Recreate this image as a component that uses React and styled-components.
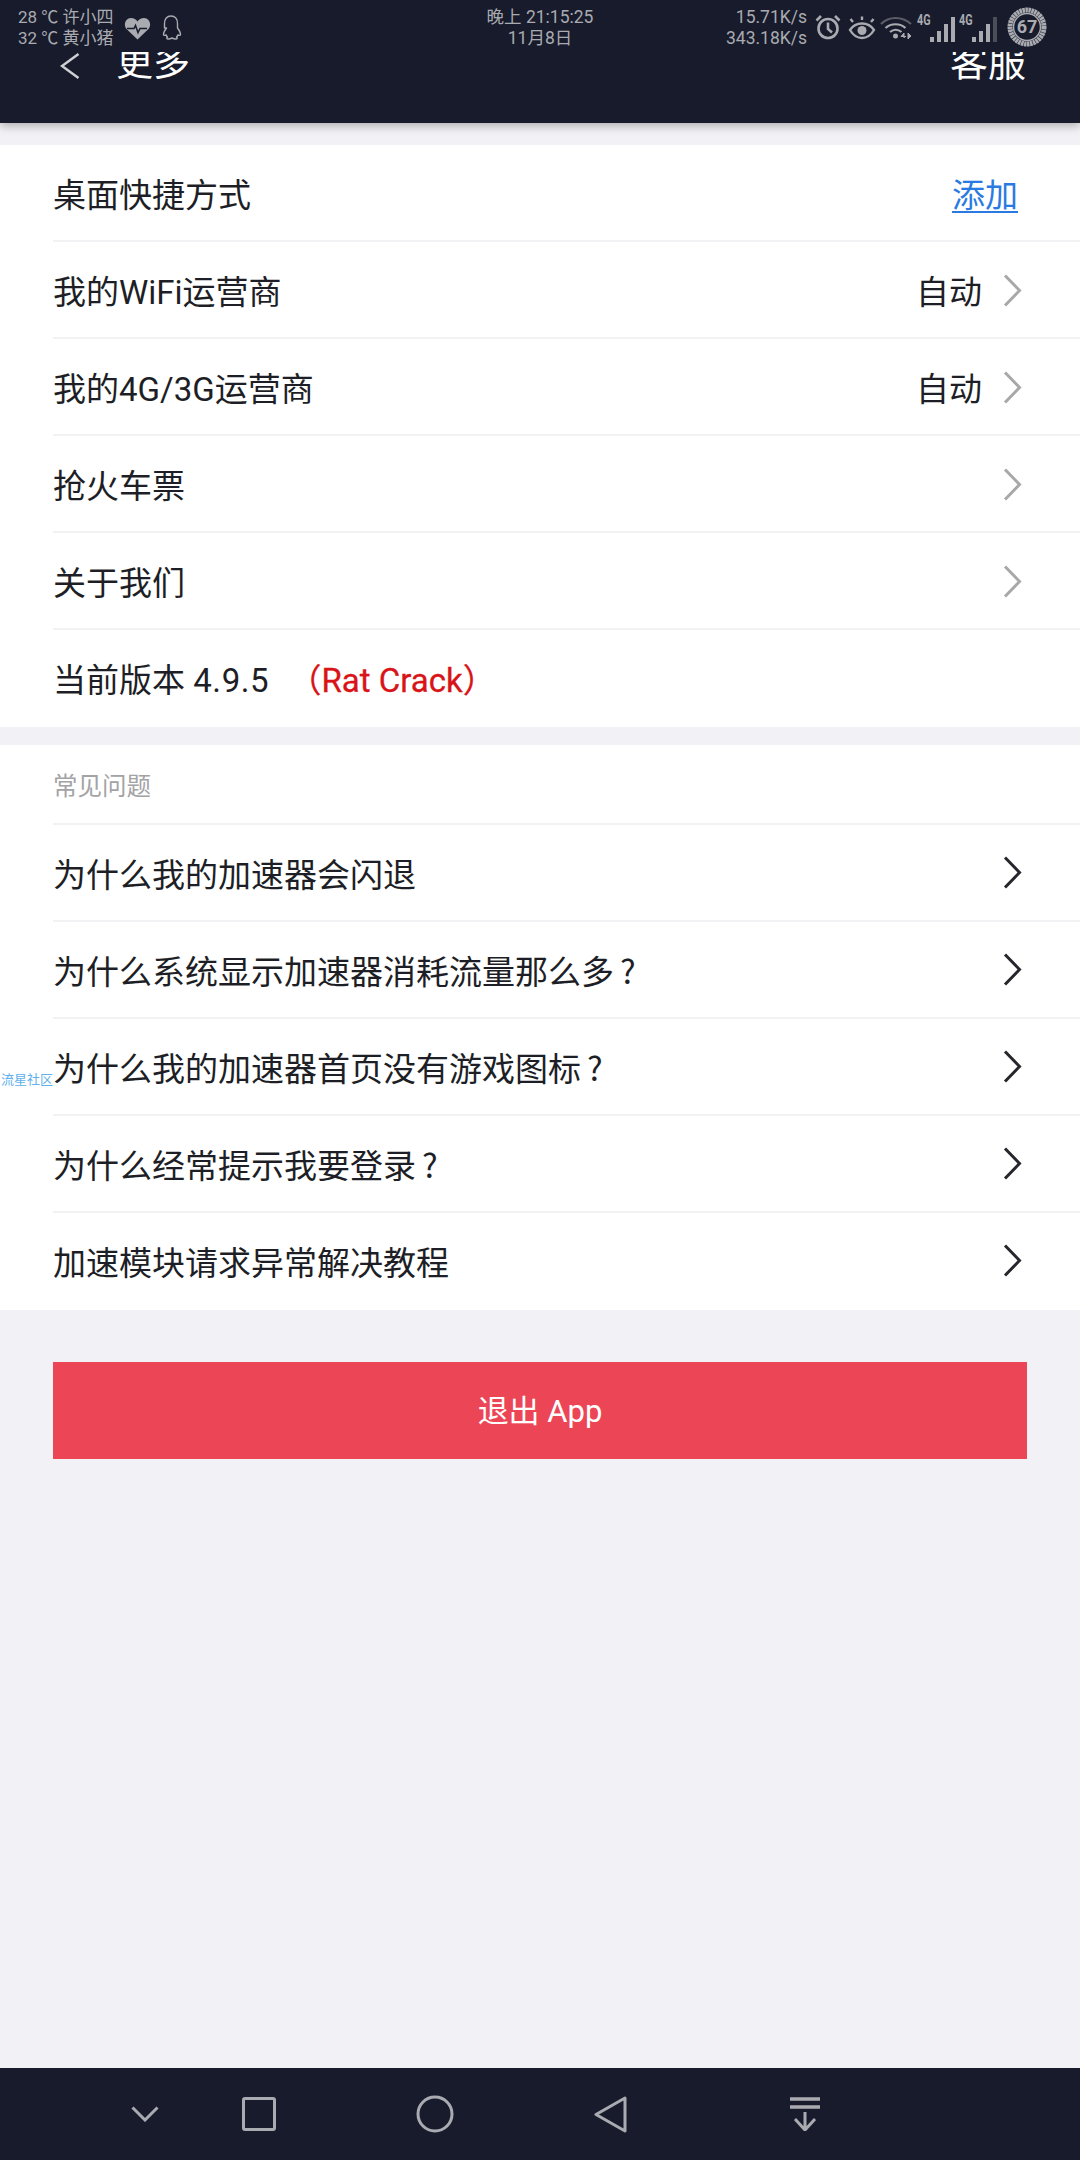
import React from 'react';
import styled, { createGlobalStyle } from 'styled-components';

const Global = createGlobalStyle`
	html, body { margin: 0; padding: 0; background: #f1f1f6; }
	* { box-sizing: border-box; }
	body { font-family: Roboto, "Noto Sans CJK SC", sans-serif; }
`;

const Page = styled.div`
	position: relative;
	width: 1080px;
	height: 2160px;
	display: flex;
	flex-direction: column;
	background: #f1f1f6;
	overflow: hidden;
`;
const Header = styled.header`
	background: #181b2b;
	box-shadow: 0 3px 9px rgba(0, 0, 0, 0.28);
`;
const StatusBar = styled.div`
	height: 52px;
	display: grid;
	grid-template-columns: minmax(0, 1fr) auto minmax(0, 1fr);
	align-items: start;
	padding: 7px 18px 0;
	color: #a9abb1;
	font-size: 17px;
	line-height: 20.5px;
`;
const StatusLeft = styled.div`
	display: flex;
	align-items: flex-start;
	gap: 9px;
`;
const StatusRight = styled.div`
	display: flex;
	justify-content: flex-end;
	align-items: flex-start;
	padding-right: 15px;
`;
const TwoLines = styled.div`
	text-align: ${(p) => p.$align || 'left'};
	white-space: nowrap;
	font-size: ${(p) => p.$size || 17}px;
`;
const IconWrap = styled.span`
	display: block;
	margin-top: ${(p) => p.$top || 0}px;
	margin-left: ${(p) => p.$left || 0}px;
	line-height: 0;
`;
const Net = styled.span`
	position: relative;
	display: block;
	width: 40px;
	height: 30px;
	margin-left: ${(p) => p.$left || 0}px;
	margin-top: 5px;
`;
const NetLabel = styled.span`
	position: absolute;
	left: 0;
	top: 1px;
	font-size: 15px;
	line-height: 14px;
	font-weight: 700;
	transform: scaleX(0.72);
	transform-origin: left top;
`;
const Dial = styled.span`
	position: relative;
	display: block;
	width: 40px;
	height: 40px;
	margin-left: 8px;
	line-height: 40px;
	text-align: center;
	font-size: 18px;
	font-weight: 700;
	color: #a9abb1;
`;
const DialRing = styled.svg`
	position: absolute;
	left: 0;
	top: 0;
`;
const NavBar = styled.div`
	height: 71px;
	overflow: hidden;
	display: flex;
	align-items: flex-start;
	padding: 1px 54px 0 60px;
	color: #fff;
`;
const BackIcon = styled.svg`
	flex: none;
	margin-right: 36px;
`;
const NavTitle = styled.div`
	font-size: ${(p) => p.$size}px;
	line-height: 38px;
	margin-top: ${(p) => p.$shift}px;
	${(p) => p.$end && 'margin-left: auto;'}
`;
const Section = styled.section`
	background: #fff;
	margin-top: ${(p) => p.$top}px;
`;
const Row = styled.div`
	height: 97px;
	margin-left: 53px;
	padding-right: 58px;
	display: flex;
	align-items: center;
	font-size: 33px;
	color: #1e1f26;
	border-bottom: 2px solid ${(p) => (p.$last ? 'transparent' : '#f2f2f4')};
`;
const RowLabel = styled.span`
	flex: 1;
	white-space: nowrap;
`;
const RowValue = styled.span`
	margin-right: 21px;
`;
const AddLink = styled.a`
	color: #2a7ae2;
	text-decoration: underline;
	text-underline-offset: 4px;
	text-decoration-thickness: 2px;
	margin-right: 4px;
`;
const VersionNumber = styled.span`
	letter-spacing: 0.6px;
`;
const Crack = styled.span`
	color: #d81418;
	margin-left: 11px;
	-webkit-text-stroke: 0.3px #d81418;
`;
const Ask = styled.span`
	font-family: "Noto Sans CJK SC", sans-serif;
	margin-left: 6px;
`;
const GroupTitle = styled.div`
	height: 80px;
	margin-left: 53px;
	display: flex;
	align-items: center;
	font-size: 24.5px;
	color: #a3a3a6;
	border-bottom: 2px solid #f2f2f4;
`;
const Watermark = styled.div`
	position: absolute;
	left: 1px;
	top: 1072px;
	font-size: 13px;
	line-height: 16px;
	color: #5fb0ec;
`;
const ExitButton = styled.button`
	display: block;
	width: 974px;
	height: 97px;
	margin: 52px 0 0 53px;
	padding: 0 0 4px;
	border: 0;
	background: #ec4656;
	color: #fff;
	font: 31px Roboto, "Noto Sans CJK SC", sans-serif;
`;
const Spacer = styled.div`
	flex: 1;
`;
const BottomBar = styled.nav`
	height: 92px;
	padding-left: 88px;
	display: grid;
	grid-template-columns: 113px 115px 237px 114px 275px;
	align-items: center;
	justify-items: center;
	background: #181b2b;
`;
const ChevronIcon = styled.svg`
	margin-top: ${(p) => p.$drop || 0}px;
`;

const grey = '#a9abb1';

const HeartIcon = () => (
	<svg width="27" height="23" viewBox="0 0 27 23">
		<path d="M13.500 22.500L2.500 12C-1 8 1.500 1 7 1c3 0 5 1.500 6.500 3.500C15 2.500 17 1 20 1c5.500 0 8 7 4.500 11z" fill={grey} />
		<path d="M3 11.500h7l1.500-3 2.500 7 2-4h7" fill="none" stroke="#181b2b" strokeWidth="1.500" />
	</svg>
);
const PenguinIcon = () => (
	<svg width="22" height="25" viewBox="0 0 22 25" fill="none" stroke={grey} strokeWidth="1.400" strokeLinejoin="round">
		<path d="M4.500 13V8.500C4.500 4 7 1 11 1s6.500 3 6.500 7.500V13c1.500 2 3 4.500 3 6.500 0 1-.8 1.300-2.500.3-.3 1-.8 1.700-1.500 2.300 1 .5 1.300 1.900-1 1.900-1.300 0-2.500-.5-3.500-1-1 .5-2.200 1-3.500 1-2.300 0-2-1.400-1-1.900-.7-.6-1.200-1.300-1.500-2.300-1.700 1-2.500.7-2.500-.3 0-2 1.500-4.500 3-6.500z" />
	</svg>
);
const AlarmIcon = () => (
	<svg width="26" height="26" viewBox="0 0 26 26" fill="none" stroke={grey} strokeWidth="2.600">
		<circle cx="13" cy="14.500" r="9.500" />
		<path d="M13 8.500v6.500l4 3.500M1.500 6.500L6 2M24.500 6.500L20 2" />
	</svg>
);
const EyeIcon = () => (
	<svg width="28" height="24" viewBox="0 0 28 24" fill="none" stroke={grey} strokeWidth="2.400">
		<path d="M2 14c3-4.500 7-6.500 12-6.500S23 9.500 26 14c-3 5-7 8-12 8S5 19 2 14z" />
		<circle cx="14" cy="14.500" r="4.500" fill={grey} stroke="none" />
		<path d="M5 6L2.500 3M14 4V0.500M23 6l2.500-3" />
	</svg>
);
const WifiIcon = () => (
	<svg width="32" height="25" viewBox="0 0 32 25" fill="none" stroke={grey} strokeWidth="2.200">
		<path d="M1 9C9 1 22 1 31 9" stroke="#5b5d68" />
		<path d="M5.500 13C11 8 20 8 25.500 13M10 17c3.500-3 8-3 11.500 0" />
		<circle cx="15.500" cy="21" r="2.500" fill={grey} stroke="none" />
		<path d="M24 23v-5l-3 3.500h5M28 18l3 3-3 3z" fill={grey} strokeWidth="1" />
	</svg>
);
const BarsIcon = ({ dim }) => (
	<svg width="26" height="25" viewBox="0 0 26 25" fill={grey}>
		<rect x="0" y="20" width="4" height="5" />
		<rect x="7" y="14" width="4" height="11" />
		<rect x="14" y="7" width="4" height="18" />
		<rect x="21" y="0" width="4" height="25" fill={dim ? '#4b4d59' : grey} />
	</svg>
);
const BackArrow = () => (
	<BackIcon width="20" height="26" viewBox="0 0 20 26" fill="none" stroke="#cfd0d4" strokeWidth="2.500">
		<path d="M18.500 1L2 13l16.500 12" />
	</BackIcon>
);
const Chevron = ({ color, drop }) => (
	<ChevronIcon $drop={drop} width="19" height="33" viewBox="0 0 19 33" fill="none" stroke={color} strokeWidth="3">
		<path d="M2 1.500L16.500 16.500 2 31.500" />
	</ChevronIcon>
);

const settings = [
	{ label: '我的WiFi运营商', value: '自动' },
	{ label: '我的4G/3G运营商', value: '自动' },
	{ label: '抢火车票' },
	{ label: '关于我们' },
];
const questions = [
	{ text: '为什么我的加速器会闪退' },
	{ text: '为什么系统显示加速器消耗流量那么多', ask: true },
	{ text: '为什么我的加速器首页没有游戏图标', ask: true },
	{ text: '为什么经常提示我要登录', ask: true },
	{ text: '加速模块请求异常解决教程' },
];

export default function App() {
	return (
		<Page>
			<Global />
			<Header>
				<StatusBar>
					<StatusLeft>
						<TwoLines>
							28 ℃ 许小四
							<br />
							32 ℃ 黄小猪
						</TwoLines>
						<IconWrap $top={10} $left={1}><HeartIcon /></IconWrap>
						<IconWrap $top={8}><PenguinIcon /></IconWrap>
					</StatusLeft>
					<TwoLines $align="center" $size={17.5}>
						晚上 21:15:25
						<br />
						11月8日
					</TwoLines>
					<StatusRight>
						<TwoLines $align="right" $size={17.5}>
							15.71K/s
							<br />
							343.18K/s
						</TwoLines>
						<IconWrap $top={7} $left={8}><AlarmIcon /></IconWrap>
						<IconWrap $top={9} $left={7}><EyeIcon /></IconWrap>
						<IconWrap $top={8} $left={4}><WifiIcon /></IconWrap>
						<Net $left={5}>
							<NetLabel>4G</NetLabel>
							<IconWrap $left={13} $top={5}><BarsIcon /></IconWrap>
						</Net>
						<Net $left={2}>
							<NetLabel>4G</NetLabel>
							<IconWrap $left={13} $top={5}><BarsIcon dim /></IconWrap>
						</Net>
						<Dial>
							<DialRing width="40" height="40" viewBox="0 0 40 40" fill="none" stroke={grey}>
								<circle cx="20" cy="20" r="17" strokeWidth="5" strokeDasharray="2.500 0.500" />
								<circle cx="20" cy="20" r="13.500" strokeWidth="1.500" />
							</DialRing>
							67
						</Dial>
					</StatusRight>
				</StatusBar>
				<NavBar>
					<BackArrow />
					<NavTitle $size={37} $shift={-8}>更多</NavTitle>
					<NavTitle $size={38} $shift={-9} $end>客服</NavTitle>
				</NavBar>
			</Header>

			<Section $top={22}>
				<Row>
					<RowLabel>桌面快捷方式</RowLabel>
					<AddLink>添加</AddLink>
				</Row>
				{settings.map((item) => (
					<Row key={item.label}>
						<RowLabel>{item.label}</RowLabel>
						{item.value && <RowValue>{item.value}</RowValue>}
						<Chevron color="#a8a8a8" drop={2} />
					</Row>
				))}
				<Row $last>
					<RowLabel>
						当前版本 <VersionNumber>4.9.5</VersionNumber> <Crack>（Rat Crack）</Crack>
					</RowLabel>
				</Row>
			</Section>

			<Section $top={18}>
				<GroupTitle>常见问题</GroupTitle>
				{questions.map((q, i) => (
					<Row key={q.text} $last={i === questions.length - 1}>
						<RowLabel>
							{q.text}
							{q.ask && <Ask>?</Ask>}
						</RowLabel>
						<Chevron color="#26272d" />
					</Row>
				))}
			</Section>

			<ExitButton>退出 App</ExitButton>
			<Spacer />

			<BottomBar>
				<svg width="28" height="16" viewBox="0 0 28 16" fill="none" stroke={grey} strokeWidth="3">
					<path d="M1.500 1.500L14 14 26.500 1.500" />
				</svg>
				<svg width="34" height="34" viewBox="0 0 34 34" fill="none" stroke={grey} strokeWidth="3">
					<rect x="1.500" y="1.500" width="31" height="31" rx="1.500" />
				</svg>
				<svg width="38" height="38" viewBox="0 0 38 38" fill="none" stroke={grey} strokeWidth="3">
					<circle cx="19" cy="19" r="17" />
				</svg>
				<svg width="33" height="37" viewBox="0 0 33 37" fill="none" stroke={grey} strokeWidth="3" strokeLinejoin="round">
					<path d="M31 2L2 18.500 31 35z" />
				</svg>
				<svg width="32" height="34" viewBox="0 0 32 34" fill="none" stroke={grey} strokeWidth="3">
					<path d="M1 2h30M1 10h30" strokeWidth="3.500" />
					<path d="M16 15v18M6 22l10 11 10-11" />
				</svg>
			</BottomBar>

			<Watermark>流星社区</Watermark>
		</Page>
	);
}
